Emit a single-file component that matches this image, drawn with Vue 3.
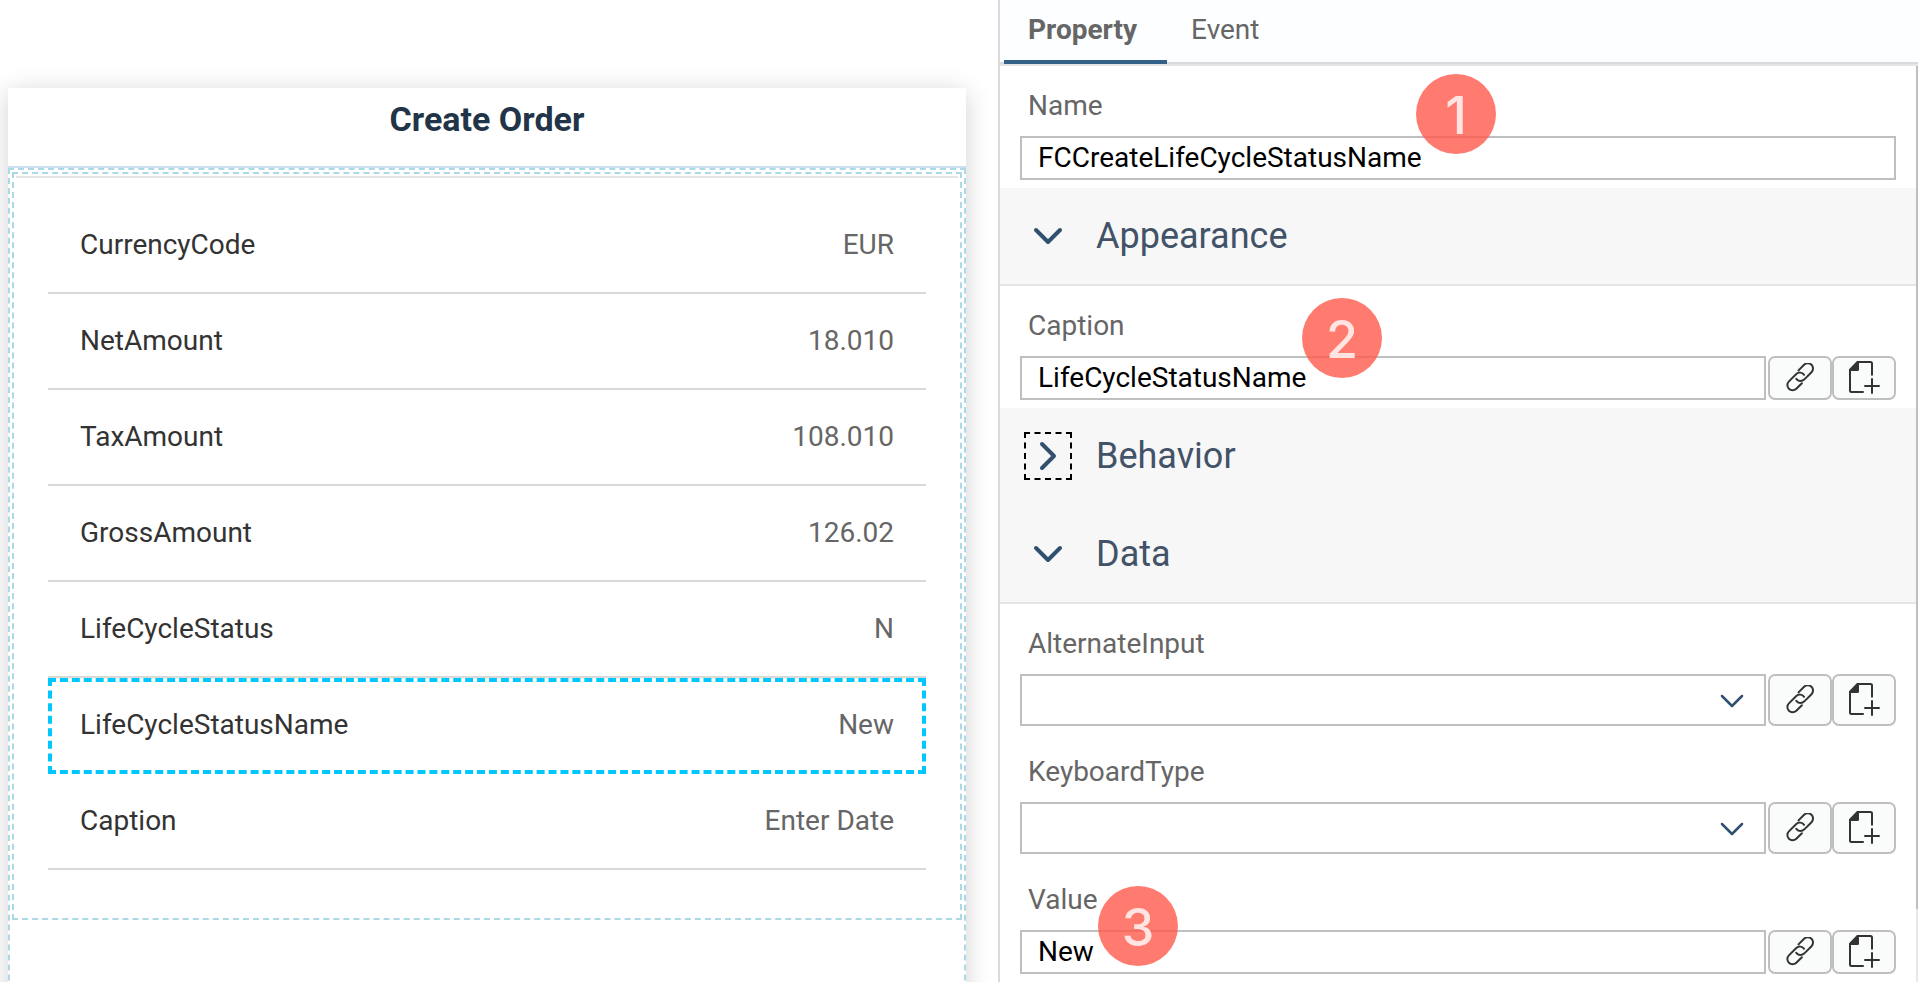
<script setup>
import { ref } from 'vue'

const rows = [
  { label: 'CurrencyCode', value: 'EUR' },
  { label: 'NetAmount', value: '18.010' },
  { label: 'TaxAmount', value: '108.010' },
  { label: 'GrossAmount', value: '126.02' },
  { label: 'LifeCycleStatus', value: 'N' },
  { label: 'LifeCycleStatusName', value: 'New' },
  { label: 'Caption', value: 'Enter Date' },
]
const selected = ref('LifeCycleStatusName')
const tabs = ['Property', 'Event']
const activeTab = ref('Property')

const items = ref([
  { kind: 'text', id: 'name', label: 'Name', value: 'FCCreateLifeCycleStatusName', badge: '1', actions: false },
  { kind: 'section', id: 'appearance', label: 'Appearance', open: true },
  { kind: 'text', id: 'caption', label: 'Caption', value: 'LifeCycleStatusName', badge: '2', actions: true },
  { kind: 'section', id: 'behavior', label: 'Behavior', open: false, focused: true },
  { kind: 'section', id: 'data', label: 'Data', open: true },
  { kind: 'select', id: 'alternate-input', label: 'AlternateInput', actions: true },
  { kind: 'select', id: 'keyboard-type', label: 'KeyboardType', actions: true },
  { kind: 'text', id: 'value', label: 'Value', value: 'New', badge: '3', actions: true },
])
</script>

<template>
  <div class="workspace">
    <main class="canvas">
      <article class="card">
        <h1 class="card-title">Create Order</h1>
        <div class="page-outline">
          <div class="section-outline">
            <ul class="rows">
              <li
                v-for="row in rows"
                :key="row.label"
                class="row"
                :class="{ selected: row.label === selected }"
                @click="selected = row.label"
              >
                <span class="row-label">{{ row.label }}</span>
                <span class="row-value">{{ row.value }}</span>
              </li>
            </ul>
          </div>
        </div>
      </article>
    </main>

    <aside class="inspector">
      <div class="tabs" role="tablist">
        <button
          v-for="tab in tabs"
          :key="tab"
          type="button"
          role="tab"
          class="tab"
          :class="{ active: tab === activeTab }"
          :aria-selected="tab === activeTab"
          @click="activeTab = tab"
        >{{ tab }}</button>
      </div>

      <div class="inspector-body">
        <div class="properties">
          <template v-for="item in items" :key="item.id">
            <div v-if="item.kind === 'section'" class="section" :class="{ open: item.open }">
              <button
                type="button"
                class="toggle"
                :class="{ focused: item.focused }"
                :aria-expanded="item.open"
                :aria-labelledby="item.id + '-title'"
              >
                <svg v-if="item.open" width="30" height="30" viewBox="0 0 30 30" aria-hidden="true">
                  <path d="M3 9 15 21 27 9" />
                </svg>
                <svg v-else width="30" height="30" viewBox="0 0 30 30" aria-hidden="true">
                  <path d="M9 3 21 15 9 27" />
                </svg>
              </button>
              <h2 :id="item.id + '-title'" class="section-title">{{ item.label }}</h2>
            </div>

            <div v-else class="field" :class="item.kind">
              <label class="field-label" :for="item.id">{{ item.label }}</label>
              <div class="control-row">
                <input v-if="item.kind === 'text'" :id="item.id" v-model="item.value" class="control" type="text" />
                <div v-else class="select-wrap">
                  <select :id="item.id" class="control">
                    <option value=""></option>
                  </select>
                  <svg class="arrow" width="24" height="14" viewBox="0 0 24 14" aria-hidden="true">
                    <path d="M2 2 12 12 22 2" />
                  </svg>
                </div>
                <div v-if="item.actions" class="actions">
                  <button type="button" class="action" :aria-label="'Bind ' + item.label">
                    <svg width="30" height="30" viewBox="0 0 30 30" aria-hidden="true">
                      <path d="M13.500 7.400 19.100 1.800a5.200 5.200 0 0 1 7.400 7.400L19.100 16.600A5.200 5.200 0 0 1 11.300 15.800" />
                      <path d="M16.900 20.200 11.300 25.800a5.200 5.200 0 0 1-7.400-7.400L11.300 11A5.200 5.200 0 0 1 19.100 11.800" />
                    </svg>
                  </button>
                  <button type="button" class="action" :aria-label="'Create rule for ' + item.label">
                    <svg width="34" height="34" viewBox="0 0 34 34" aria-hidden="true">
                      <path d="M16 31H4.500Q3 31 3 29.500V9L10.500 1H23.500Q25 1 25 2.500V13.700M25 18V32M18 25H32" />
                      <path class="fold" d="M2 8.500 10 0.500H12V8.500Q12 10 10.500 10H2Z" />
                    </svg>
                  </button>
                </div>
              </div>
              <span v-if="item.badge" class="badge" :class="'badge-' + item.id">{{ item.badge }}</span>
            </div>
          </template>
        </div>
        <div class="scrollbar"><div class="thumb"></div></div>
      </div>
    </aside>
  </div>
</template>

<style>
body {
  background: #fff;
}
</style>

<style scoped>
.workspace,
.workspace * {
  box-sizing: border-box;
}
.workspace {
  display: grid;
  grid-template-columns: minmax(0, 998fr) minmax(0, 920fr);
  height: 100vh;
  overflow: hidden;
  font-family: Roboto, "Liberation Sans", sans-serif;
  font-size: 28px;
  line-height: 36px;
}
.canvas {
  padding: 88px 32px 0 8px;
  overflow: hidden;
  min-height: 0;
}
.card {
  display: flex;
  flex-direction: column;
  min-height: 100vh;
  background: #fff;
  box-shadow: 0 4px 24px rgba(0, 0, 0, 0.18);
}
.card-title {
  margin: 0;
  height: 80px;
  padding-top: 13px;
  border-bottom: 2px solid #cddff0;
  text-align: center;
  font-size: 34px;
  font-weight: 700;
  color: #223548;
}
.page-outline {
  flex: 1;
  padding: 2px;
  border: 2px dashed #add8e6;
}
.section-outline {
  padding: 2px 2px 48px;
  border: 2px dashed #add8e6;
}
.rows {
  list-style: none;
  margin: 0;
  padding: 20px 32px 0;
  border-top: 2px solid #e5e5e5;
}
.row {
  display: flex;
  align-items: center;
  justify-content: space-between;
  height: 96px;
  padding: 0 32px;
  border-bottom: 2px solid #d9d9d9;
}
.row.selected {
  padding: 0 28px 2px;
  border: 4px dashed #00c8ff;
}
.row-label {
  color: #333;
}
.row-value {
  color: #666;
}
.inspector {
  display: flex;
  flex-direction: column;
  min-height: 0;
  border-left: 2px solid #d9d9de;
}
.tabs {
  display: flex;
  flex: none;
  height: 66px;
  padding-left: 4px;
  background: #fdfeff;
  box-shadow: inset 0 -2px #e5e5e5, inset 0 -4px #d9dcdf;
}
.tab {
  height: 64px;
  padding: 0 30px 0 24px;
  border: 0;
  border-bottom: 4px solid transparent;
  background: none;
  font: inherit;
  color: #666;
}
.tab.active {
  font-weight: 700;
  border-bottom-color: #346187;
}
.inspector-body {
  display: flex;
  flex: 1;
  min-height: 0;
}
.properties {
  flex: 1;
  min-width: 0;
  overflow: hidden;
}
.scrollbar {
  width: 2px;
  background: #e8e8e8;
}
.thumb {
  height: 92%;
  background: #bfbfbf;
}
.section {
  display: flex;
  align-items: center;
  gap: 24px;
  height: 98px;
  padding-left: 24px;
  background: #f7f7f7;
  border-bottom: 2px solid #f7f7f7;
}
.section.open {
  border-bottom-color: #e5e5e5;
}
.toggle {
  display: flex;
  align-items: center;
  justify-content: center;
  width: 48px;
  height: 48px;
  padding: 0;
  border: 2px dashed transparent;
  background: none;
}
.toggle.focused {
  border-color: #000;
}
.toggle path {
  fill: none;
  stroke: #2f506e;
  stroke-width: 4;
  stroke-linecap: round;
  stroke-linejoin: round;
}
.section-title {
  margin: 0;
  font-size: 36px;
  line-height: 48px;
  font-weight: 400;
  color: #425268;
}
.field {
  position: relative;
  padding: 20px 20px 8px;
}
.field.select {
  padding-bottom: 6px;
}
.field-label {
  display: block;
  width: max-content;
  height: 50px;
  padding: 2px 8px 0;
  color: #666;
}
.control-row {
  display: flex;
  gap: 2px;
}
.control {
  flex: 1;
  width: 100%;
  min-width: 0;
  height: 44px;
  padding: 0 16px 2px;
  border: 2px solid #bfbfbf;
  border-radius: 0;
  background: #fff;
  font: inherit;
  color: #000;
  outline: 0;
}
select.control {
  display: block;
  height: 52px;
  appearance: none;
}
.select-wrap {
  position: relative;
  flex: 1;
}
.arrow {
  position: absolute;
  right: 22px;
  top: 20px;
  pointer-events: none;
}
.arrow path {
  fill: none;
  stroke: #2f506e;
  stroke-width: 2.5;
  stroke-linecap: round;
  stroke-linejoin: round;
}
.actions {
  display: flex;
}
.action {
  display: flex;
  align-items: center;
  justify-content: center;
  width: 64px;
  padding: 0;
  border: 2px solid #bfbfbf;
  border-radius: 7px;
  background: #fafcfb;
}
.action path {
  fill: none;
  stroke: #333;
  stroke-width: 2;
  stroke-linecap: round;
}
.action path.fold {
  fill: #333;
  stroke: none;
}
.badge {
  position: absolute;
  z-index: 1;
  width: 80px;
  height: 80px;
  border-radius: 50%;
  background: rgba(255, 90, 76, 0.8);
  color: rgba(255, 255, 255, 0.8);
  font-family: Inter, "Liberation Sans", sans-serif;
  font-size: 52px;
  font-weight: 500;
  line-height: 84px;
  text-align: center;
  pointer-events: none;
}
.badge-name {
  left: 416px;
  top: 8px;
}
.badge-caption {
  left: 302px;
  top: 12px;
}
.badge-value {
  left: 98px;
  top: 26px;
}
</style>
